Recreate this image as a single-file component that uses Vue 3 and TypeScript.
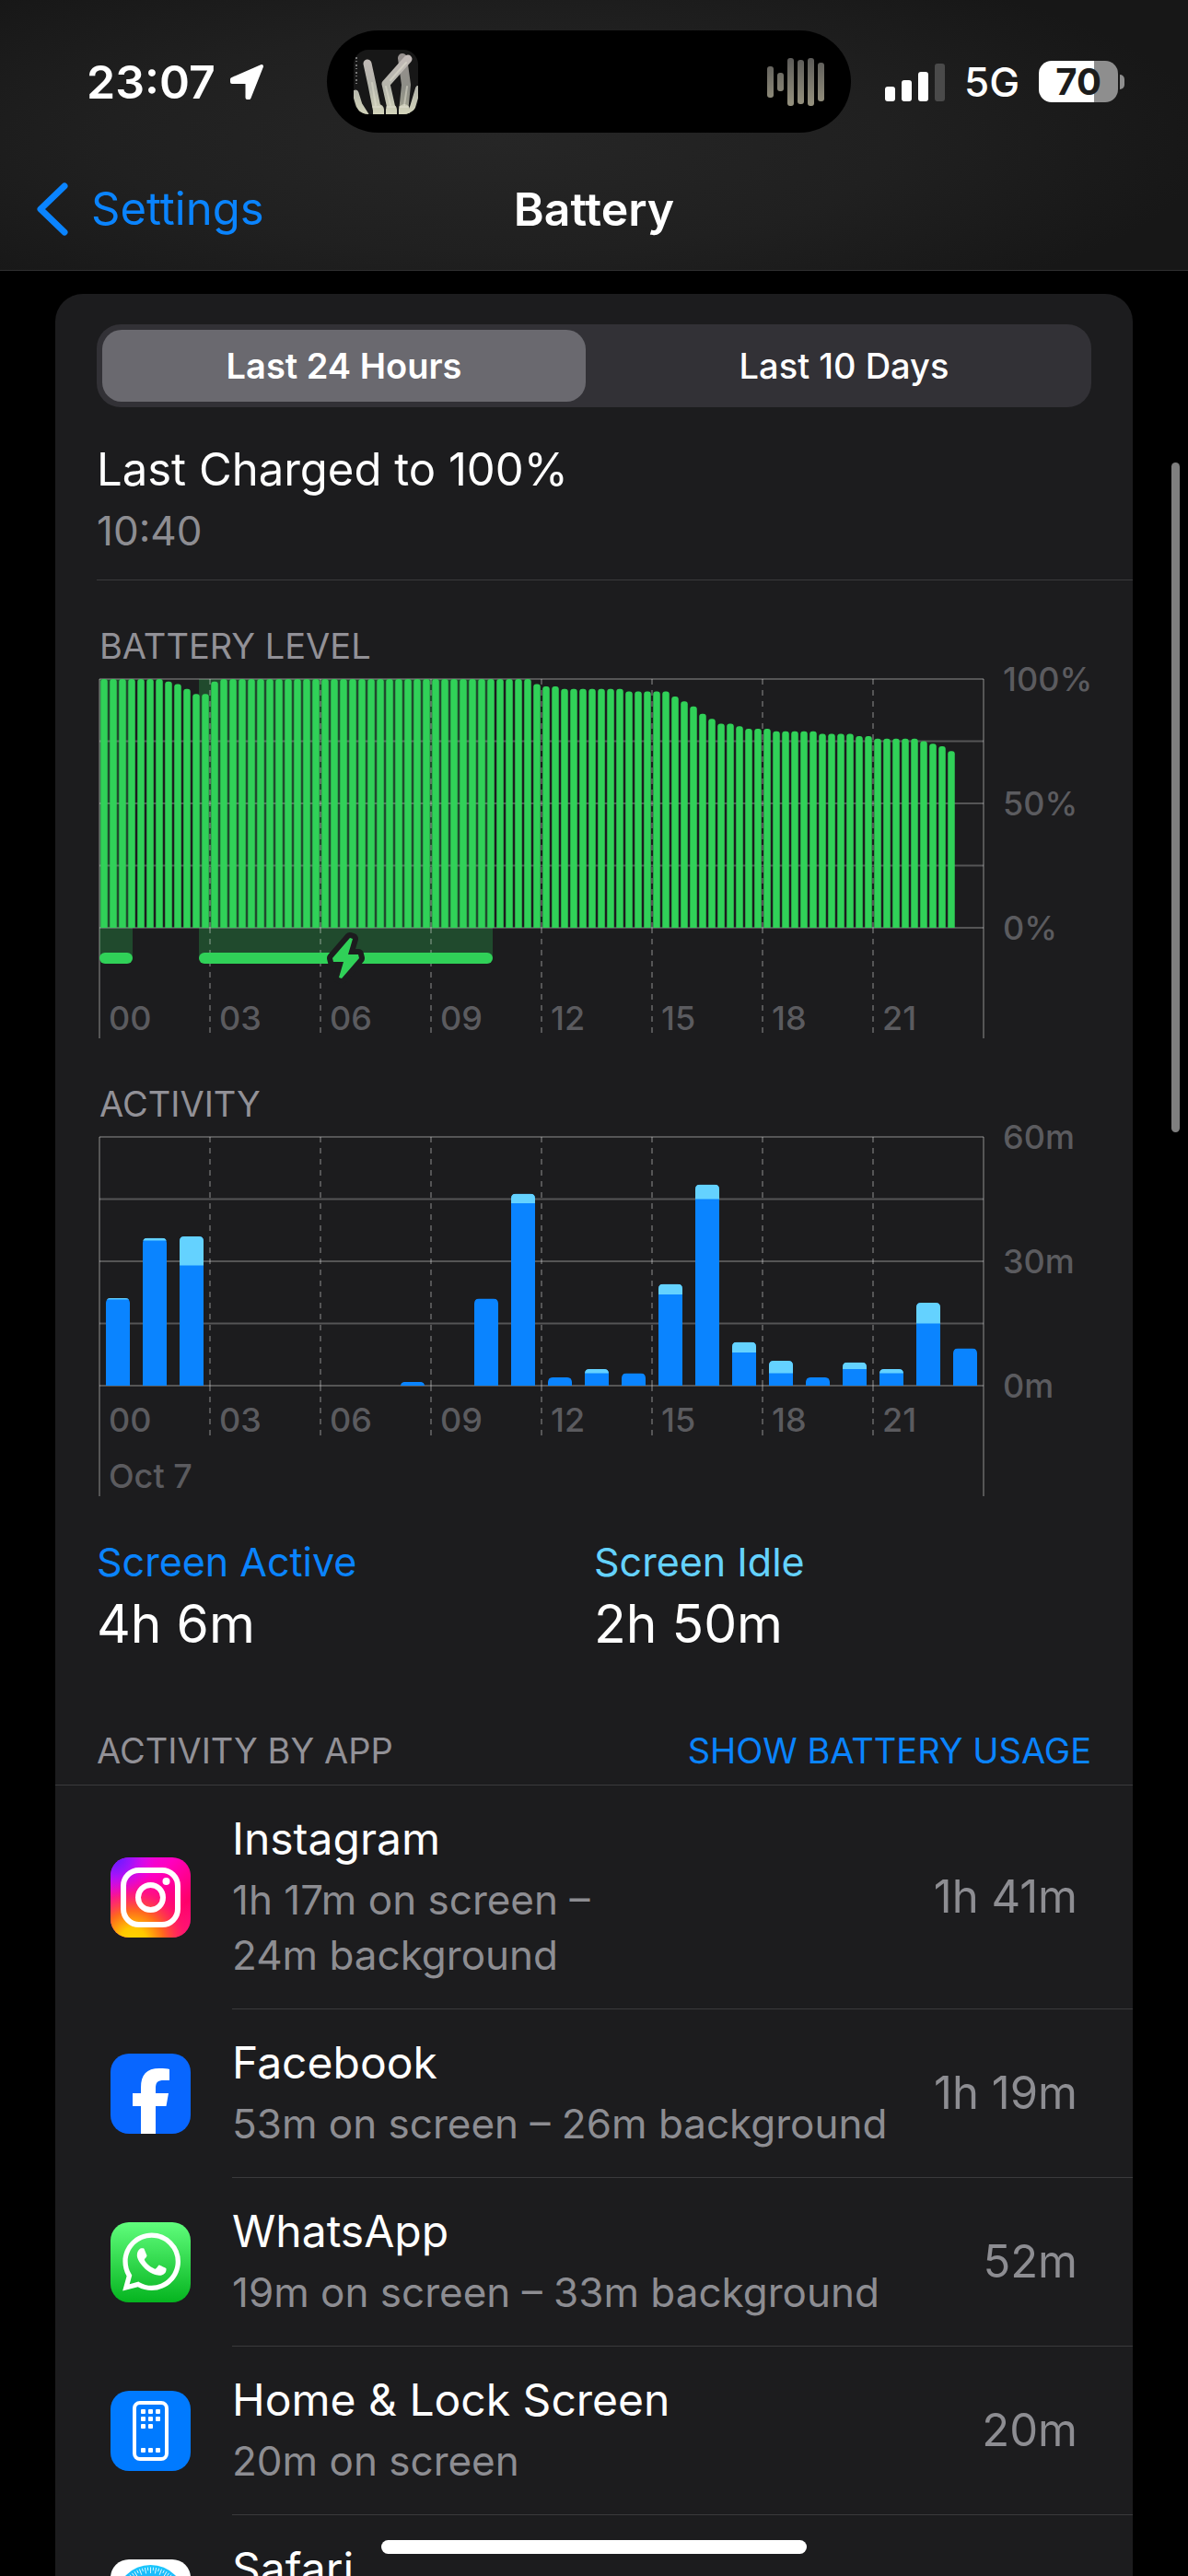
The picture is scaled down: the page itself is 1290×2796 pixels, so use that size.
<script setup lang="ts">
import { computed, ref } from 'vue'

interface Run {
  count: number
  level: number
}

interface Hour {
  active: number
  idle: number
}

interface AppUsage {
  id: string
  name: string
  detail: string
  total: string
}

const PLOT_WIDTH = 960
const PLOT_HEIGHT = 270
const FRAME_HEIGHT = 390

const ranges = ['Last 24 Hours', 'Last 10 Days']
const selected = ref(0)

// Battery level per quarter hour, stored as runs of equal values.
const runs: Run[] = [
  { count: 7, level: 100 }, { count: 1, level: 99 }, { count: 1, level: 98 },
  { count: 1, level: 96 }, { count: 2, level: 94 }, { count: 1, level: 99 },
  { count: 34, level: 100 }, { count: 1, level: 98 }, { count: 2, level: 97 },
  { count: 7, level: 96 }, { count: 5, level: 95 }, { count: 1, level: 93 },
  { count: 1, level: 91 }, { count: 1, level: 89 }, { count: 1, level: 86 },
  { count: 1, level: 84 }, { count: 2, level: 82 }, { count: 1, level: 81 },
  { count: 3, level: 80 }, { count: 5, level: 79 }, { count: 4, level: 78 },
  { count: 2, level: 77 }, { count: 5, level: 76 }, { count: 1, level: 75 },
  { count: 1, level: 74 }, { count: 1, level: 73 }, { count: 1, level: 71 },
]
const levels = computed(() => runs.flatMap((r) => Array<number>(r.count).fill(r.level)))

const charging = [
  { start: 0, end: 36 },
  { start: 108, end: 427 },
]

// Minutes of screen time for every hour of the day.
const hours: Hour[] = [
  { active: 20.8, idle: 0.3 }, { active: 35, idle: 0.6 }, { active: 29, idle: 7 },
  { active: 0, idle: 0 }, { active: 0, idle: 0 }, { active: 0, idle: 0 },
  { active: 0, idle: 0 }, { active: 0, idle: 0 }, { active: 0.9, idle: 0 },
  { active: 0, idle: 0 }, { active: 21, idle: 0 }, { active: 44, idle: 2.3 },
  { active: 2, idle: 0 }, { active: 3, idle: 1 }, { active: 3, idle: 0 },
  { active: 22, idle: 2.5 }, { active: 45, idle: 3.5 }, { active: 8, idle: 2.5 },
  { active: 3, idle: 3 }, { active: 2, idle: 0 }, { active: 4, idle: 1.6 },
  { active: 3, idle: 1 }, { active: 15, idle: 5 }, { active: 9, idle: 0 },
]

const hourLabels = ['00', '03', '06', '09', '12', '15', '18', '21']
const gridRows = [0, 1, 2, 3, 4].map((i) => (i * PLOT_HEIGHT) / 4)
const gridCols = [1, 2, 3, 4, 5, 6, 7].map((i) => (i * PLOT_WIDTH) / 8)

/** Column with rounded top corners standing on the base line. */
function column(x: number, width: number, height: number, radius: number): string {
  const r = Math.min(radius, height)
  const top = PLOT_HEIGHT - height
  return `M${x} ${PLOT_HEIGHT}V${top + r}Q${x} ${top} ${x + r} ${top}H${x + width - r}Q${x + width} ${top} ${x + width} ${top + r}V${PLOT_HEIGHT}Z`
}

const levelBars = computed(() => {
  const slot = PLOT_WIDTH / 96
  return levels.value.map((v, i) => column(i * slot + slot / 8, slot * 0.75, (v / 100) * PLOT_HEIGHT, 3))
})

const activityBars = computed(() => {
  const slot = PLOT_WIDTH / 24
  const scale = PLOT_HEIGHT / 60
  return hours
    .map((h, i) => ({
      id: i,
      path: column(i * slot + 7, 26, (h.active + h.idle) * scale, 5),
      total: h.active + h.idle,
      x: i * slot + 7,
      split: PLOT_HEIGHT - h.active * scale,
      idle: h.idle * scale,
    }))
    .filter((b) => b.total > 0)
})

// The background part of each line is kept together when it wraps.
const apps: AppUsage[] = [
  { id: 'instagram', name: 'Instagram', detail: '1h 17m on screen – 24m\u00a0background', total: '1h 41m' },
  { id: 'facebook', name: 'Facebook', detail: '53m on screen – 26m\u00a0background', total: '1h 19m' },
  { id: 'whatsapp', name: 'WhatsApp', detail: '19m on screen – 33m\u00a0background', total: '52m' },
  { id: 'home', name: 'Home & Lock Screen', detail: '20m on screen', total: '20m' },
  { id: 'safari', name: 'Safari', detail: '', total: '' },
]

const homeDots = [
  [33, 20], [41, 20], [49, 20],
  [33, 28], [41, 28], [49, 28],
  [33, 36], [41, 36],
  [33, 62], [41, 62], [49, 62],
]
const ticks = Array.from({ length: 72 }, (_, i) => i * 5)
</script>

<template>
  <div class="screen">
    <header class="top">
      <div class="status">
        <div class="clock">
          <span class="time">23:07</span>
          <svg class="arrow" viewBox="0 0 40 40" aria-hidden="true">
            <path d="M4 17L36 3L22.5 37H20.5V20H4Z" fill="#fff" stroke="#fff" stroke-width="4" stroke-linejoin="round" />
          </svg>
        </div>
        <div class="island">
          <svg class="thumb" viewBox="0 0 70 70" aria-hidden="true">
            <defs>
              <linearGradient id="bone" x1="0" y1="0" x2="0" y2="70" gradientUnits="userSpaceOnUse">
                <stop offset="0" stop-color="#c4bab9" />
                <stop offset="0.6" stop-color="#b4b5ab" />
                <stop offset="1" stop-color="#d3d4ba" />
              </linearGradient>
            </defs>
            <rect width="70" height="70" fill="#171717" />
            <g stroke="url(#bone)" stroke-linecap="round" stroke-linejoin="round" fill="none">
              <path d="M53 9L57 38L54 68" stroke-width="10" opacity="0.75" />
              <path d="M15 15L20 38L26 68" stroke-width="9" />
              <path d="M59 10L35 37L42 68" stroke-width="9" />
              <path d="M2 47L6 60L13 71" stroke-width="7" />
              <path d="M70 42L62 69" stroke-width="6" />
              <path d="M27 65V70M41 65V70M55 65V70" stroke-width="12" />
            </g>
            <g stroke="#e3e1d2" stroke-width="2" stroke-linecap="round" fill="none" opacity="0.5">
              <path d="M20 36L24 60M35 40L40 60M57 14L40 33M58 40L55 60M21 62H29M36 62H45M50 62H59" />
            </g>
            <path d="M3 8V40" stroke="#777" stroke-width="2" stroke-dasharray="2 2 1 3" />
          </svg>
          <svg class="wave" viewBox="0 0 62 54" aria-hidden="true">
            <defs>
              <linearGradient id="sound" x1="0" y1="0" x2="0" y2="54" gradientUnits="userSpaceOnUse">
                <stop offset="0" stop-color="#5b5a58" />
                <stop offset="1" stop-color="#97937f" />
              </linearGradient>
            </defs>
            <g fill="url(#sound)">
              <rect x="0" y="10" width="7" height="34" rx="3" />
              <rect x="11" y="17" width="7" height="20" rx="3" />
              <rect x="22" y="1" width="7" height="52" rx="3" />
              <rect x="33" y="3" width="7" height="48" rx="3" />
              <rect x="44" y="1" width="7" height="52" rx="3" />
              <rect x="55" y="6" width="7" height="42" rx="3" />
            </g>
          </svg>
        </div>
        <div class="signals">
          <svg class="bars" viewBox="0 0 65 42" aria-hidden="true">
            <rect x="0" y="26" width="11" height="16" rx="3" fill="#fff" />
            <rect x="18" y="19" width="11" height="23" rx="3" fill="#fff" />
            <rect x="36" y="10" width="11" height="32" rx="3" fill="#fff" />
            <rect x="54" y="1" width="11" height="41" rx="3" fill="#4a4a4a" />
          </svg>
          <span class="network">5G</span>
          <span class="cell"><span class="charge">70</span><i class="nub"></i></span>
        </div>
      </div>
      <nav class="nav">
        <a class="back" href="#settings">
          <svg class="chevron" viewBox="0 0 34 58" aria-hidden="true">
            <path d="M30 4L4 29L30 54" fill="none" stroke="#0a84ff" stroke-width="7" stroke-linecap="round" stroke-linejoin="round" />
          </svg>
          <span>Settings</span>
        </a>
        <h1 class="title">Battery</h1>
        <span></span>
      </nav>
    </header>

    <main class="content">
      <section class="card">
        <div class="segments" role="group" aria-label="Time range">
          <button
            v-for="(label, i) in ranges"
            :key="label"
            type="button"
            class="segment"
            :class="{ chosen: selected === i }"
            :aria-pressed="selected === i"
            @click="selected = i"
          >
            {{ label }}
          </button>
        </div>

        <div class="charged">
          <p class="headline">Last Charged to 100%</p>
          <p class="detail">10:40</p>
        </div>

        <h2 class="caption">BATTERY LEVEL</h2>
        <div class="chart">
          <div class="plot">
            <svg class="drawing" :viewBox="`0 0 ${PLOT_WIDTH} ${FRAME_HEIGHT}`" preserveAspectRatio="none" role="img" aria-label="Battery level">
              <rect v-for="c in charging" :key="c.start" :x="c.start" y="0" :width="c.end - c.start" height="303" class="region" />
              <g class="grid">
                <path v-for="y in gridRows" :key="y" :d="`M0 ${y}H${PLOT_WIDTH}`" />
                <path :d="`M0 0V${FRAME_HEIGHT}M${PLOT_WIDTH} 0V${FRAME_HEIGHT}`" />
                <g stroke-dasharray="6 6">
                  <path v-for="x in gridCols" :key="x" :d="`M${x} 0V${PLOT_HEIGHT}M${x} ${PLOT_HEIGHT}V384`" />
                </g>
              </g>
              <path v-for="(d, i) in levelBars" :key="i" :d="d" fill="#30d158" />
              <rect v-for="c in charging" :key="c.end" :x="c.start" y="297" :width="c.end - c.start" height="12" rx="6" fill="#30d158" />
              <path
                d="M272 281L253 303L254 307H265L260 324L263 325L282 303L281 299H270L275 282Z"
                fill="#30d158"
                stroke="#1c1c1e"
                stroke-width="12"
                stroke-linejoin="round"
                paint-order="stroke"
              />
            </svg>
            <div class="hours">
              <span v-for="h in hourLabels" :key="h">{{ h }}</span>
            </div>
          </div>
          <div class="scale"><span>100%</span><span>50%</span><span>0%</span></div>
        </div>

        <h2 class="caption">ACTIVITY</h2>
        <div class="chart">
          <div class="plot">
            <svg class="drawing" :viewBox="`0 0 ${PLOT_WIDTH} ${FRAME_HEIGHT}`" preserveAspectRatio="none" role="img" aria-label="Activity">
              <defs>
                <clipPath v-for="b in activityBars" :id="`bar-${b.id}`" :key="b.id">
                  <path :d="b.path" />
                </clipPath>
              </defs>
              <g class="grid">
                <path v-for="y in gridRows" :key="y" :d="`M0 ${y}H${PLOT_WIDTH}`" />
                <path :d="`M0 0V${FRAME_HEIGHT}M${PLOT_WIDTH} 0V${FRAME_HEIGHT}`" />
                <g stroke-dasharray="6 6">
                  <path v-for="x in gridCols" :key="x" :d="`M${x} 0V${PLOT_HEIGHT}M${x} ${PLOT_HEIGHT}V324`" />
                </g>
              </g>
              <g v-for="b in activityBars" :key="b.id" :clip-path="`url(#bar-${b.id})`">
                <path :d="b.path" fill="#0a84ff" />
                <rect :x="b.x" :y="b.split - b.idle" width="26" :height="b.idle" fill="#64d2ff" />
              </g>
            </svg>
            <div class="hours">
              <span v-for="h in hourLabels" :key="h">{{ h }}</span>
            </div>
            <div class="day">Oct 7</div>
          </div>
          <div class="scale"><span>60m</span><span>30m</span><span>0m</span></div>
        </div>

        <dl class="totals">
          <div>
            <dt class="active">Screen Active</dt>
            <dd>4h 6m</dd>
          </div>
          <div>
            <dt class="idle">Screen Idle</dt>
            <dd>2h 50m</dd>
          </div>
        </dl>

        <div class="listhead">
          <h2>ACTIVITY BY APP</h2>
          <button type="button">SHOW BATTERY USAGE</button>
        </div>

        <ul class="apps">
          <li v-for="app in apps" :key="app.id" class="app">
            <svg class="icon" viewBox="0 0 87 87" aria-hidden="true">
              <template v-if="app.id === 'instagram'">
                <defs>
                  <linearGradient id="ig-base" x1="0" y1="0" x2="1" y2="1">
                    <stop offset="0" stop-color="#d10aff" />
                    <stop offset="0.4" stop-color="#ff00c0" />
                    <stop offset="0.75" stop-color="#ff0068" />
                    <stop offset="1" stop-color="#ff1a7a" />
                  </linearGradient>
                  <radialGradient id="ig-warm" cx="0.28" cy="1.05" r="0.85">
                    <stop offset="0" stop-color="#ffd600" />
                    <stop offset="0.2" stop-color="#ffc800" />
                    <stop offset="0.45" stop-color="#ff6a1c" />
                    <stop offset="0.75" stop-color="#ff1a6a" stop-opacity="0.6" />
                    <stop offset="1" stop-color="#ff0080" stop-opacity="0" />
                  </radialGradient>
                  <radialGradient id="ig-cool" cx="0.05" cy="0" r="0.5">
                    <stop offset="0" stop-color="#5a1cff" />
                    <stop offset="0.4" stop-color="#8a18ff" stop-opacity="0.8" />
                    <stop offset="1" stop-color="#d010ff" stop-opacity="0" />
                  </radialGradient>
                </defs>
                <rect width="87" height="87" fill="url(#ig-base)" />
                <rect width="87" height="87" fill="url(#ig-warm)" />
                <rect width="87" height="87" fill="url(#ig-cool)" />
                <rect x="14" y="14" width="59" height="59" rx="17" fill="none" stroke="#fff" stroke-width="6" />
                <circle cx="43.5" cy="43.5" r="13.5" fill="none" stroke="#fff" stroke-width="6" />
                <circle cx="60.5" cy="26" r="4" fill="#fff" />
              </template>
              <template v-else-if="app.id === 'facebook'">
                <rect width="87" height="87" fill="#0866ff" />
                <path d="M33 87V57H24V43H33V37C33 23 39 16 53 16C58 16 62 16.3 64 17V29H58C51 29 49 31 49 38V43H63L60.5 57H49V87Z" fill="#fff" />
              </template>
              <template v-else-if="app.id === 'whatsapp'">
                <defs>
                  <linearGradient id="wa" x1="0" y1="0" x2="0" y2="1">
                    <stop offset="0" stop-color="#60fd7c" />
                    <stop offset="1" stop-color="#05b41f" />
                  </linearGradient>
                </defs>
                <rect width="87" height="87" fill="url(#wa)" />
                <path
                  transform="translate(13 11.5) scale(2.63)"
                  fill="#fff"
                  d="M17.472 14.382c-.297-.149-1.758-.867-2.03-.967-.273-.099-.471-.148-.67.15-.197.297-.767.966-.94 1.164-.173.199-.347.223-.644.075-.297-.15-1.255-.463-2.39-1.475-.883-.788-1.48-1.761-1.653-2.059-.173-.297-.018-.458.13-.606.134-.133.298-.347.446-.52.149-.174.198-.298.298-.497.099-.198.05-.371-.025-.52-.075-.149-.669-1.612-.916-2.207-.242-.579-.487-.5-.669-.51-.173-.008-.371-.01-.57-.01-.198 0-.52.074-.792.372-.272.297-1.04 1.016-1.04 2.479 0 1.462 1.065 2.875 1.213 3.074.149.198 2.096 3.2 5.077 4.487.709.306 1.262.489 1.694.625.712.227 1.36.195 1.871.118.571-.085 1.758-.719 2.006-1.413.248-.694.248-1.289.173-1.413-.074-.124-.272-.198-.57-.347m-5.421 7.403h-.004a9.87 9.87 0 01-5.031-1.378l-.361-.214-3.741.982.998-3.648-.235-.374a9.86 9.86 0 01-1.51-5.26c.001-5.45 4.436-9.884 9.888-9.884 2.64 0 5.122 1.03 6.988 2.898a9.825 9.825 0 012.893 6.994c-.003 5.45-4.437 9.884-9.885 9.884m8.413-18.297A11.815 11.815 0 0012.05 0C5.495 0 .16 5.335.157 11.892c0 2.096.547 4.142 1.588 5.945L.057 24l6.305-1.654a11.882 11.882 0 005.683 1.448h.005c6.554 0 11.89-5.335 11.893-11.893a11.821 11.821 0 00-3.48-8.413Z"
                />
              </template>
              <template v-else-if="app.id === 'home'">
                <rect width="87" height="87" fill="#007aff" />
                <rect x="26" y="13" width="35" height="61" rx="6" fill="none" stroke="#fff" stroke-width="4" />
                <rect v-for="([x, y], i) in homeDots" :key="i" :x="x" :y="y" width="5" height="5" rx="1" fill="#fff" />
              </template>
              <template v-else>
                <defs>
                  <linearGradient id="sf" x1="0" y1="0" x2="0" y2="1">
                    <stop offset="0" stop-color="#1bc8fc" />
                    <stop offset="1" stop-color="#1d6ff2" />
                  </linearGradient>
                </defs>
                <rect width="87" height="87" fill="#fff" />
                <circle cx="43.5" cy="43.5" r="37.5" fill="url(#sf)" />
                <path
                  v-for="t in ticks"
                  :key="t"
                  :d="t % 10 ? 'M43.5 8.5V12' : 'M43.5 8.5V15'"
                  :transform="`rotate(${t} 43.5 43.5)`"
                  stroke="#fff"
                  stroke-width="0.8"
                />
                <path d="M68 19L48 48L39 39Z" fill="#ff3b30" />
                <path d="M19 68L48 48L39 39Z" fill="#fff" />
              </template>
            </svg>
            <div class="entry">
              <div class="words">
                <p class="name">{{ app.name }}</p>
                <p v-if="app.detail" class="usage">{{ app.detail }}</p>
              </div>
              <span v-if="app.total" class="total">{{ app.total }}</span>
            </div>
          </li>
        </ul>
      </section>
    </main>

    <div class="thumbtrack" aria-hidden="true"></div>
    <div class="homebar" aria-hidden="true"></div>
  </div>
</template>

<style>
body {
  margin: 0;
  background: #000;
}
</style>

<style scoped>
.screen {
  position: relative;
  display: flex;
  flex-direction: column;
  height: 100vh;
  overflow: hidden;
  background: #000;
  color: #fff;
  font-family: Inter, Roboto, sans-serif;
  font-size: 49px;
  line-height: 60px;
}
h1,
h2,
p,
ul,
dl,
dd {
  margin: 0;
  padding: 0;
}
button {
  border: 0;
  padding: 0;
  background: none;
  color: inherit;
  font: inherit;
}

.top {
  flex: none;
  border-bottom: 1px solid #2f2f30;
  padding-bottom: 16px;
  background: radial-gradient(ellipse 60% 75% at 42% 52%, #262626 0%, #202020 55%, #171717 100%);
}
.status {
  display: grid;
  grid-template-columns: 355fr 569fr 366fr;
  align-items: center;
  height: 177px;
}
.clock {
  display: flex;
  align-items: center;
  gap: 14px;
  padding-left: 94px;
}
.time {
  font-size: 50px;
  font-weight: 600;
}
.arrow {
  width: 40px;
  height: 40px;
}
.island {
  display: flex;
  align-items: center;
  justify-content: space-between;
  height: 111px;
  box-sizing: border-box;
  padding: 0 29px;
  border-radius: 56px;
  background: #000;
}
.thumb {
  width: 70px;
  height: 70px;
  border-radius: 16px;
}
.wave {
  width: 62px;
  height: 54px;
}
.signals {
  display: flex;
  align-items: center;
  padding-left: 37px;
}
.bars {
  width: 65px;
  height: 42px;
}
.network {
  margin: 0 21px;
  font-size: 44px;
  font-weight: 500;
}
.cell {
  display: flex;
  align-items: center;
  gap: 2px;
}
.charge {
  width: 86px;
  height: 45px;
  border-radius: 14px;
  background: linear-gradient(to right, #fff 70%, #8e8e8e 70%);
  color: #1c1c1c;
  font-size: 40px;
  font-weight: 700;
  line-height: 45px;
  text-align: center;
}
.nub {
  width: 5px;
  height: 16px;
  border-radius: 0 8px 8px 0;
  background: #8e8e8e;
}

.nav {
  display: grid;
  grid-template-columns: 1fr auto 1fr;
  align-items: center;
  height: 100px;
}
.back {
  display: flex;
  align-items: center;
  gap: 25px;
  padding-left: 40px;
  color: #0a84ff;
  text-decoration: none;
}
.chevron {
  width: 34px;
  height: 58px;
}
.title {
  font-size: 50px;
  font-weight: 600;
}

.content {
  flex: 1;
  min-height: 0;
  overflow-y: auto;
  scrollbar-width: none;
  padding: 25px 60px 0;
}
.card {
  overflow: hidden;
  border-radius: 30px 30px 0 0;
  padding-top: 33px;
  background: #1c1c1e;
}
.segments {
  display: grid;
  grid-template-columns: 1fr 1fr;
  gap: 18px;
  margin: 0 45px;
  padding: 6px;
  border-radius: 26px;
  background: #323136;
}
.segment {
  height: 78px;
  border-radius: 21px;
  font-size: 38px;
  font-weight: 500;
}
.segment.chosen {
  background: #6a696f;
  font-weight: 600;
}
.charged {
  display: grid;
  gap: 6px;
  margin: 38px 0 0 45px;
  padding-bottom: 23px;
  border-bottom: 1px solid #3a3a3c;
}
.detail {
  color: #8d8d92;
  font-size: 44px;
}
.caption {
  margin: 47px 0 12px 48px;
  color: #929197;
  font-size: 38px;
  font-weight: 400;
  line-height: 48px;
}

.chart {
  display: flex;
  margin: 0 45px 0 48px;
  color: #5b5b5f;
  font-size: 36px;
  font-weight: 500;
  line-height: 44px;
}
.plot {
  position: relative;
  flex: 1;
  height: 390px;
  display: flex;
  flex-direction: column;
  justify-content: flex-end;
  gap: 17px;
}
.drawing {
  position: absolute;
  inset: 0;
  width: 100%;
  height: 100%;
  overflow: visible;
}
.region {
  fill: #30d158;
  fill-opacity: 0.26;
}
.grid {
  fill: none;
  stroke: #fff;
  stroke-opacity: 0.25;
  stroke-width: 2;
}
.hours {
  display: grid;
  grid-template-columns: repeat(8, 1fr);
}
.hours span,
.day {
  padding-left: 10px;
}
.scale {
  flex: none;
  display: flex;
  flex-direction: column;
  justify-content: space-between;
  width: 96px;
  height: 314px;
  margin-top: -22px;
  padding-left: 21px;
}

.totals {
  display: grid;
  grid-template-columns: 1fr 1fr;
  margin: 41px 45px 0;
}
.totals dt {
  font-size: 43px;
}
.totals dd {
  margin-top: 2px;
  font-size: 57px;
  line-height: 72px;
}
.active {
  color: #0a84ff;
}
.idle {
  color: #64d2ff;
}
.listhead {
  display: flex;
  justify-content: space-between;
  margin-top: 77px;
  padding: 0 45px 13px;
  border-bottom: 1px solid #3a3a3c;
  font-size: 38px;
  line-height: 48px;
}
.listhead h2 {
  color: #929197;
  font-size: 38px;
  font-weight: 400;
}
.listhead button {
  color: #0a84ff;
}

.apps {
  list-style: none;
}
.app {
  display: flex;
  align-items: center;
  padding-left: 60px;
}
.icon {
  flex: none;
  width: 87px;
  height: 87px;
  margin-right: 45px;
  border-radius: 20px;
}
.entry {
  flex: 1;
  display: flex;
  align-items: center;
  justify-content: space-between;
  gap: 36px;
  box-sizing: border-box;
  min-height: 183px;
  padding: 28px 60px 28px 0;
  border-bottom: 1px solid #3a3a3c;
}
.words {
  align-self: flex-start;
}
.name {
  font-size: 48px;
}
.usage {
  margin-top: 6px;
  color: #8d8d92;
  font-size: 44px;
}
.total {
  flex: none;
  color: #8d8d92;
}

.thumbtrack {
  position: absolute;
  top: 502px;
  right: 9px;
  width: 9px;
  height: 727px;
  border-radius: 5px;
  background: #7f7f7f;
}
.homebar {
  position: absolute;
  bottom: 24px;
  left: 50%;
  width: 462px;
  height: 15px;
  margin-left: -231px;
  border-radius: 8px;
  background: #fff;
}
</style>
